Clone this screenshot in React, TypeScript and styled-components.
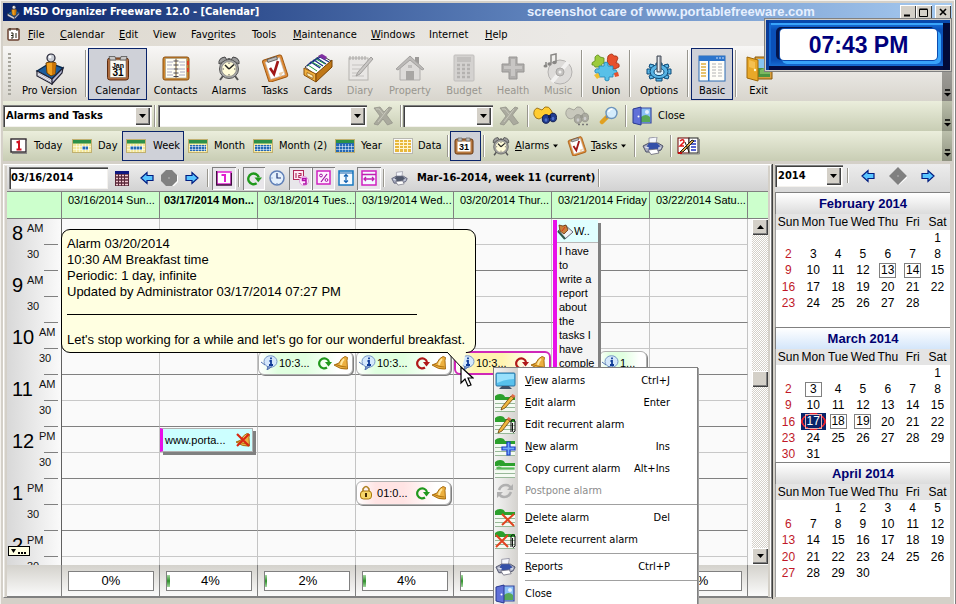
import React from "react";
import styled, { createGlobalStyle, css } from "styled-components";

const UI = `"DejaVu Sans Condensed", "DejaVu Sans", sans-serif`;
const ARIAL = `"Liberation Sans", Arial, sans-serif`;

const Global = createGlobalStyle`
  * { box-sizing: border-box; }
  html, body { margin: 0; height: 100%; overflow: hidden; }
  body { font: 11px/14px ${UI}; color: #000; background: #d4d0c8; }
  button, input, select { font: inherit; color: inherit; margin: 0; }
  button { background: none; border: 0; padding: 0; white-space: nowrap; }
  svg { display: block; flex: none; }
  u { text-underline-offset: 1px; }
`;

/* ---------- icons ---------- */

type IconProps = { w?: number; h?: number; vb?: string; children?: React.ReactNode };
const Icon = ({ w = 16, h = w, vb, children }: IconProps) => (
  <svg width={w} height={h} viewBox={vb ?? `0 0 ${w} ${h}`} aria-hidden="true">
    {children}
  </svg>
);

const ProIcon = ({ size = 32 }: { size?: number }) => (
  <Icon w={size} vb="0 0 32 32">
    <path d="M3 18L16 10L29 15L18 26Z" fill="#1c5c9c" stroke="#062a50" strokeWidth="1.4" />
    <path d="M3 18L18 26L18 31L3 23Z" fill="#f4f4fa" stroke="#223" strokeWidth="1.2" />
    <path d="M18 26L29 15L28 20L18 31Z" fill="#b8bcd8" stroke="#223" strokeWidth="1.2" />
    <path d="M4 20L18 28M4 22L18 30" stroke="#99a" strokeWidth=".7" />
    <path d="M12 10Q17 7 22 10L21 21L17 23L13 20Z" fill="#f0a020" stroke="#6a3c00" strokeWidth="1" />
    <path d="M18 10L22 10L21 21L18 22Z" fill="#c87408" />
    <circle cx="17" cy="5" r="4" fill="#c8ccd4" stroke="#223" strokeWidth="1.2" />
    <circle cx="16" cy="4" r="1.4" fill="#fff" />
  </Icon>
);

const JanIcon = () => (
  <Icon w={24} h={26}>
    <rect x="1.5" y="3" width="21" height="22" rx="2.5" fill="#b06a3c" stroke="#5c2c10" />
    <rect x="4" y="5" width="16" height="17.5" fill="#fbfbf4" stroke="#7a6a5a" strokeWidth=".6" />
    <path d="M3 1.5H9L10 5H4ZM15 1.5H21L20 5H14Z" fill="#c8c8c8" stroke="#555" strokeWidth=".8" />
    <text x="12" y="12.5" fontSize="7" fontWeight="bold" textAnchor="middle" fontFamily="Liberation Sans">Jan</text>
    <text x="12" y="21" fontSize="10" fontWeight="bold" textAnchor="middle" fontFamily="Liberation Sans">31</text>
  </Icon>
);

const ContactsIcon = () => (
  <Icon w={28} h={26}>
    <rect x="1" y="2" width="26" height="23" rx="2" fill="#d08830" stroke="#8a5010" />
    <rect x="3.500" y="3.500" width="10" height="19.500" fill="#fffef4" stroke="#998" strokeWidth=".6" />
    <rect x="14.500" y="3.500" width="10" height="19.500" fill="#fffef4" stroke="#998" strokeWidth=".6" />
    <path d="M5 7h6M5 10h5M5 14h6M5 17h5M5 20h6M17 7h6M18 10h5M17 14h6M18 17h5M17 20h6" stroke="#a8a8c0" strokeWidth="1" />
    <path d="M11.500 6h5M11.500 10h5M11.500 14h5M11.500 18h5M11.500 21.500h5" stroke="#445" strokeWidth="1" />
    <path d="M25 6h2v4h-2zM25 13h2v4h-2z" fill="#e04020" />
  </Icon>
);

const ClockIcon = ({ size = 26 }: { size?: number }) => (
  <Icon w={size} vb="0 0 26 26">
    <path d="M7 21L4 25M19 21L22 25" stroke="#555" strokeWidth="2" />
    <path d="M3 9Q2 3 9 2L11 5Z" fill="#9a9a9a" stroke="#444" />
    <path d="M23 9Q24 3 17 2L15 5Z" fill="#9a9a9a" stroke="#444" />
    <path d="M11.500 3h3v2h-3z" fill="#666" />
    <circle cx="13" cy="14" r="9.500" fill="#a8a8a8" stroke="#555" />
    <circle cx="13" cy="14" r="7.400" fill="#fffbd8" stroke="#777" strokeWidth=".7" />
    <path d="M13 14L9 10M13 14L18 9.500" stroke="#222" strokeWidth="1.500" />
    <path d="M13 7.500v1.500M13 19v1.500M6.500 14H8M18 14h1.500" stroke="#555" />
  </Icon>
);

const TaskIcon = ({ size = 28 }: { size?: number }) => (
  <Icon w={size} vb="0 0 28 28">
    <g transform="rotate(-18 14 14)">
      <rect x="4" y="3" width="20" height="23" rx="2" fill="#e08c38" stroke="#a05810" />
      <rect x="6.500" y="5.500" width="15" height="18" fill="#fff" stroke="#bbb" strokeWidth=".6" />
      <path d="M9 3.500h10v3H9z" fill="#b8b8b8" stroke="#555" strokeWidth=".8" />
      <path d="M16 20h6l-6 4z" fill="#f0d0a8" />
    </g>
    <path d="M9 14L13 20L17 7" fill="none" stroke="#a01818" strokeWidth="2.600" />
  </Icon>
);

const CardsIcon = () => (
  <Icon w={30} h={30}>
    <path d="M2 14L18 2L28 8L14 23Z" fill="#fff" stroke="#444" />
    <path d="M4 13L8 9l9 6M7 11l4-4 9 6M10 9l4-4 9 6M13 7l4-3 9 5" fill="none" stroke="#1b2f86" strokeWidth="1.300" />
    <path d="M5 12l9 6M9 9l9 5M13 6l9 5" stroke="#20a040" />
    <path d="M15 3l4-2 5 3-2 3z" fill="#8030a0" />
    <path d="M1 15L13 21V29L1 22Z" fill="#f0b040" stroke="#8a5008" />
    <path d="M13 21L29 7V14L13 29Z" fill="#c07818" stroke="#7a4404" />
    <path d="M4 19.500l6 3v3l-6-3z" fill="#fff3c0" stroke="#8a5008" strokeWidth=".7" />
  </Icon>
);

const DiaryIcon = () => (
  <Icon w={28}>
    <rect x="3" y="4" width="19" height="22" fill="#e8e6e4" stroke="#b4b2ae" />
    <path d="M4 2v4M7 2v4M10 2v4M13 2v4M16 2v4M19 2v4" stroke="#a8a6a4" />
    <path d="M6 11h12M6 15h8M6 19h5M6 22h12" stroke="#c4c2c0" />
    <path d="M25 3l2 2L14 20l-4 2 2-4z" fill="#c8c6c4" stroke="#a09e9c" />
  </Icon>
);

const HouseIcon = () => (
  <Icon w={30} h={28}>
    <path d="M20 3h4v7h-4z" fill="#9c9a98" />
    <path d="M5 14L15 5L25 14V26H5Z" fill="#dddbd9" stroke="#b0aeac" />
    <path d="M1 15L15 2L29 15L27 16L15 6L3 16Z" fill="#bcbab8" stroke="#a4a2a0" />
    <path d="M11 17h8v9h-8z" fill="#a8a6a4" /><path d="M13 11h4v3h-4z" fill="#c0bebc" />
  </Icon>
);

const BudgetIcon = () => (
  <Icon w={22} h={28}>
    <rect x="1" y="1" width="20" height="26" rx="1" fill="#d4d2d0" stroke="#c0bebc" />
    <rect x="4" y="3" width="14" height="5" fill="#c2c0be" />
    {[11, 15, 19, 23].map((y) => (
      <path key={y} d={`M4 ${y}h3M9 ${y}h3M14 ${y}h3`} stroke="#b4b2b0" strokeWidth="2.500" />
    ))}
  </Icon>
);

const HealthIcon = () => (
  <Icon w={26}>
    <path d="M9 2h8v7h7v8h-7v7H9v-7H2V9h7z" fill="#b0aeac" stroke="#989694" />
    <path d="M11 4h4v7h7v3h-7v7h-4v-7H4v-3h7z" fill="#c8c6c4" />
  </Icon>
);

const MusicIcon = () => (
  <Icon w={30} h={32}>
    <circle cx="17" cy="19" r="12" fill="#dddbd9" stroke="#b4b2b0" />
    <path d="M17 19L25 9M17 19L9 29" stroke="#f2f1f0" strokeWidth="4" />
    <circle cx="17" cy="19" r="4" fill="#c4c2c0" stroke="#aaa8a6" /><circle cx="17" cy="19" r="1.500" fill="#f2f1f0" />
    <path d="M8 10V2l5-1v8M3 13V9" stroke="#888684" fill="none" strokeWidth="1.500" />
    <ellipse cx="6.500" cy="11" rx="2.200" ry="1.700" fill="#888684" /><ellipse cx="11.500" cy="9.500" rx="2.200" ry="1.700" fill="#888684" />
    <ellipse cx="2.500" cy="13" rx="2" ry="1.500" fill="#888684" />
  </Icon>
);

const UnionIcon = () => (
  <Icon w={30} h={30}>
    <path d="M4 4q3-4 5 0l4 1v5q-4 1-2 4H4q-1-3-3-2-1-3 3-4z" fill="#9ccb3c" stroke="#5c8a18" strokeWidth=".8" />
    <path d="M17 3q4-4 6 0 3-1 4 2l-2 5q4 0 3 4l-4 2q-5 0-5-4-4-1-2-9z" fill="#e8502c" stroke="#a02c10" strokeWidth=".8" />
    <path d="M8 13h5q-1-4 2-4t2 4h5v4q4-1 4 2t-4 2v3h-4q1 4-2 4t-2-4H8v-4q-5 1-4-3 1-2 4-1z" fill="#58c0e8" stroke="#1c80b0" strokeWidth=".8" />
    <path d="M23 20l4-1 1 4-4 1z" fill="#e8502c" /><path d="M3 22l4-2 2 4-3 2z" fill="#f0c030" />
  </Icon>
);

const OptionsIcon = () => (
  <Icon w={28} h={28}>
    <g stroke="#0c4a78" strokeWidth="1" fill="#58b4e4">
      <path d="M11 9h6v4h-6zM11 23h6v4h-6zM2 15h5v5H2zM21 15h5v5h-5z" />
      <path d="M5 10l4 1-1 4-4-2zM23 10l-4 1 1 4 4-2zM5 25l4-1-1-4-4 2zM23 25l-4-1 1-4 4 2z" />
      <ellipse cx="14" cy="17.500" rx="9" ry="7" />
    </g>
    <ellipse cx="14" cy="18" rx="5" ry="3.600" fill="#d8f0fc" stroke="#0c4a78" />
    <path d="M12 2h4v16h-4z" fill="#a8acb4" stroke="#444c58" /><path d="M13 3h1v14h-1z" fill="#e8ecf0" />
  </Icon>
);

const BasicIcon = () => (
  <Icon w={28} h={27}>
    <rect x="1" y="1" width="26" height="25" fill="#fffef8" stroke="#2c6cb4" />
    <path d="M1 1h26v5H1z" fill="#2c74cc" /><path d="M18 3h2M21 3h2M24 3h2" stroke="#cfe4ff" />
    <path d="M10 6h1.500v20H10z" fill="#2c74cc" />
    <path d="M3 9h5M3 12h5M3 15h5M3 18h5M3 21h5" stroke="#e0b040" strokeWidth="1.500" />
    <path d="M14 9h4M20 9h4M14 12h4M20 12h4M14 15h4M20 15h4M14 18h4M20 18h4M14 21h4M20 21h4" stroke="#b4b4b4" />
  </Icon>
);

const ExitIcon = () => (
  <Icon w={28}>
    <path d="M10 3h17v22H10z" fill="#d8a040" stroke="#8a5808" />
    <path d="M12 5h13v9H12z" fill="#88c4f0" /><path d="M12 14h13v9H12z" fill="#4c9440" /><path d="M15 16l6-3 4 3v4H15z" fill="#7cb860" />
    <path d="M2 3l11 3v21L2 24z" fill="#e8a828" stroke="#a06808" /><path d="M4 6l6 2v7L4 13z" fill="#f4c050" />
    <circle cx="10" cy="16" r="1.200" fill="#fff8d0" />
  </Icon>
);

const CrossIcon = () => (
  <Icon w={22} h={20}>
    <path d="M2 2l6-1 4 5 5-5 3 1-5.500 7 6 8-5 2-4.500-6-5 6-4-1L8 10z" fill="#aaaa9e" stroke="#94948a" strokeWidth=".8" />
    <path d="M4 3l3 0 4 5M16 3L6 16" stroke="#c8c8bc" fill="none" />
  </Icon>
);

const BinocularsIcon = ({ muted }: { muted?: boolean }) => {
  const [a, b, c] = muted ? ["#c8c8bc", "#aaaaa0", "#999990"] : ["#ffcc30", "#203c90", "#101c50"];
  return (
    <Icon w={26} h={20}>
      <path d="M2 9q-1-5 3-7l5 2 3-3q4-1 6 3l3 6-4 4-7-3-4 2-3-1z" fill={a} stroke={muted ? c : "#8a6008"} strokeWidth=".8" />
      <ellipse cx="14" cy="13" rx="3.700" ry="4.300" fill={b} stroke={c} /><ellipse cx="21" cy="11.500" rx="3.500" ry="4.300" fill={b} stroke={c} />
      <path d="M16 9h3v3h-3z" fill={c} />
      <ellipse cx="14" cy="14" rx="1.400" ry="1.800" fill={muted ? "#ccc" : "#5070c8"} /><ellipse cx="21" cy="12.500" rx="1.300" ry="1.800" fill={muted ? "#ccc" : "#5070c8"} />
      {muted && <path d="M14 18.500h2M18 18.500h2M22 18.500h2" stroke="#777" strokeWidth="1.500" />}
    </Icon>
  );
};

const LensIcon = () => (
  <Icon w={20} h={20}>
    <path d="M8 11L3 16" stroke="#e0a020" strokeWidth="4.500" strokeLinecap="round" />
    <path d="M9 10l-2 2" stroke="#888" strokeWidth="2" />
    <circle cx="12.500" cy="7" r="5.500" fill="#d4ecfc" stroke="#6c94bc" strokeWidth="1.400" />
    <path d="M9.500 6q1-3 4-3" stroke="#fff" fill="none" strokeWidth="1.500" />
  </Icon>
);

const DoorIcon = ({ size = 20 }: { size?: number }) => (
  <Icon w={size} vb="0 0 20 20">
    <path d="M8 2h11v15H8z" fill="#8cc0f8" stroke="#3848a0" strokeWidth="1.200" />
    <path d="M9 11q5-4 9 0v5H9z" fill="#58a858" /><circle cx="15" cy="6" r="2" fill="#e4f0ff" />
    <path d="M1 3l8-2v18l-8-2z" fill="#6070d8" stroke="#283890" /><circle cx="6.500" cy="10.500" r="1" fill="#fff" />
  </Icon>
);

const TodayIcon = () => (
  <Icon w={17} h={16}>
    <rect x="1" y="1" width="15" height="13" fill="#fff" stroke="#302830" strokeWidth="1.400" />
    <path d="M2 15.500h15V3" stroke="#888" fill="none" />
    <path d="M6.500 4.500L9 3.500V11M6.500 11.500H11.500" stroke="#d01020" strokeWidth="2" fill="none" />
  </Icon>
);

type GridIconProps = { body: string; cells?: string; top?: string };
const GridIcon = ({ body, cells = "#f4e89c", top = "#2c9048" }: GridIconProps) => (
  <Icon w={20} h={14}>
    <rect x=".5" y=".5" width="19" height="13" fill={cells} stroke="#c0b070" />
    <path d="M1 1h18v3.500H1z" fill={top} />
    <path d={body} fill="#2468b4" />
    <path d="M1 7.500h18M1 10.500h18M4.500 5v8M7.500 5v8M10.500 5v8M13.500 5v8M16.500 5v8" stroke="#fff" strokeOpacity=".5" />
  </Icon>
);

const DataIcon = () => (
  <Icon w={20} h={16}>
    <rect x=".5" y=".5" width="19" height="15" fill="#f8f8f8" stroke="#b8b8b0" />
    <path d="M2 2h16v12H2z" fill="#e8b83c" />
    <path d="M2 4.500h16M2 7.500h16M2 10.500h16M6.500 2v12M10.500 2v12M14.500 2v12" stroke="#fff4d0" />
  </Icon>
);

const Board31Icon = () => (
  <Icon w={20} h={18}>
    <rect x="1" y="2" width="18" height="15" rx="2" fill="#b87840" stroke="#6a3810" />
    <rect x="3.500" y="4.500" width="13" height="10" fill="#fff" />
    <path d="M4 1h4v3H4zM12 1h4v3h-4z" fill="#bbb" stroke="#666" strokeWidth=".7" />
    <text x="10" y="13.300" fontSize="9" fontWeight="bold" textAnchor="middle" fontFamily="Liberation Sans">31</text>
  </Icon>
);

const PrinterIcon = ({ w = 22, h = 18, grey }: { w?: number; h?: number; grey?: boolean }) => (
  <Icon w={w} h={h} vb="0 0 22 18">
    <path d="M7 1l8-1-1 7H7z" fill="#f4f6fc" stroke="#889" strokeWidth=".8" />
    <path d="M1 9l6-3h9l5 3-2 4-5 2H4z" fill="#a8acc0" stroke="#4c5068" />
    <path d="M7 6h8l3 3-2 3-9 1-2-4z" fill={grey ? "#50586c" : "#3450a8"} />
    <path d="M3 10l4 1M16 11h3" stroke="#e4e8f4" strokeWidth="1.200" />
    <path d="M6 13l9-1 2 4-8 1.500z" fill="#fff" stroke="#667" strokeWidth=".8" />
  </Icon>
);

const NotebookIcon = () => (
  <Icon w={24} h={18}>
    <rect x="1" y="1" width="11" height="15" fill="#fff" stroke="#600" />
    <rect x="12" y="1" width="9" height="15" fill="#fff" stroke="#222" /><path d="M22.500 2v15H3" fill="none" stroke="#888" />
    <path d="M3 4q4-3 4 1l-4 4h4" stroke="#e01818" strokeWidth="1.500" fill="none" />
    <path d="M14 4h5M14 7h5M14 10h5M14 13h5" stroke="#2030c0" strokeWidth="1.400" />
    <path d="M3 15L15 3l2 1L6 15z" fill="#d8a050" stroke="#221" /><path d="M8 5l4 10" stroke="#221" />
    <path d="M1 15h4v2H1z" fill="#c01010" />
  </Icon>
);

const CalGridIcon = () => (
  <Icon w={14} h={15}>
    <path d="M0 0h14v15H0z" fill="#582838" /><path d="M0 0h14v3H0z" fill="#101880" />
    {[4, 7, 10, 13].map((y) => (
      <path key={y} d={`M1 ${y + 0.500}h2M4 ${y + 0.500}h2M7 ${y + 0.500}h2M10 ${y + 0.500}h3`} stroke="#f0c8d0" strokeWidth="1.500" />
    ))}
  </Icon>
);

const ArrowIcon = ({ right }: { right?: boolean }) => (
  <Icon w={14} h={14}>
    <path
      d={right ? "M13 7L7 1.500V4.500H1V9.500H7V12.500Z" : "M1 7L7 1.500V4.500H13V9.500H7V12.500Z"}
      fill="#58c4ff" stroke="#001c80" strokeWidth="1.200"
    />
  </Icon>
);

const DiamondIcon = ({ round }: { round?: boolean }) => (
  <Icon w={18} h={18}>
    <path d={round ? "M7 2h6l5 5v6l-4 4H7L2 13V7z" : "M10 1l9 9-9 8-8-8z"} fill="#fff" />
    <path d={round ? "M6 1h6l5 5v6l-5 5H6L1 12V6z" : "M9 0l9 9-9 9-9-9z"} fill="#808080" />
    <path d="M9 8v2M8 9h2" stroke="#a4a4a4" />
  </Icon>
);

const OneIcon = () => (
  <Icon w={16} h={15}>
    <rect x="1" y="1" width="14" height="12" fill="#fff" stroke="#e020d0" strokeWidth="1.500" />
    <path d="M.5 0v14M0 14h16M15.500 14V2" fill="none" stroke="#401040" strokeWidth="1.500" />
    <path d="M5.500 4H9v7" stroke="#e020d0" strokeWidth="2" fill="none" />
  </Icon>
);

const RefreshIcon = ({ color = "#20981c", size = 14 }: { color?: string; size?: number }) => (
  <Icon w={size} vb="0 0 14 14">
    <path d="M9 11.500A5 5 0 1 1 11 6" fill="none" stroke={color} strokeWidth="2.200" />
    <path d="M7 6h7l-3.500 4.500z" fill={color} />
  </Icon>
);

const FaceIcon = () => (
  <Icon w={16}>
    <circle cx="8" cy="8" r="7" fill="#e4f0fc" stroke="#6080b8" strokeWidth="1.500" />
    <path d="M8 3v5h4" stroke="#203878" fill="none" strokeWidth="1.200" />
    <path d="M8 13v1M2.500 8h1" stroke="#6080b8" />
  </Icon>
);

const TwelveIcon = () => (
  <Icon w={16}>
    <rect x=".5" y=".5" width="10" height="9" fill="#ffe8f4" stroke="#b02858" />
    <path d="M3 3v5M5.500 3.500h2.500v2H5.800v2H8.500" stroke="#b02858" fill="none" strokeWidth="1.100" />
    <circle cx="11" cy="11" r="4.500" fill="#ffe8ff" stroke="#e0a0dc" />
    <path d="M13 10.500H9.500v-2H13v5.500H10" stroke="#b010a8" strokeWidth="1.500" fill="none" />
  </Icon>
);

const PercentIcon = () => (
  <Icon w={16}>
    <rect x="1" y="1" width="13" height="13" fill="#fff0ff" stroke="#d020c0" strokeWidth="1.500" />
    <path d="M11 4L5 12" stroke="#a010a0" strokeWidth="1.200" />
    <circle cx="5" cy="5.500" r="1.400" fill="none" stroke="#a010a0" /><circle cx="10.500" cy="10" r="1.400" fill="none" stroke="#a010a0" />
  </Icon>
);

const StretchIcon = ({ across }: { across?: boolean }) => (
  <Icon w={16}>
    <rect x="1" y="1" width="14" height="14" fill="#f4faff" stroke={across ? "#d020c0" : "#1878c0"} strokeWidth="1.500" />
    {across ? (
      <path d="M1 4.500h14M3 9h10M5 7L3 9l2 2M11 7l2 2-2 2" stroke="#c020b0" fill="none" strokeWidth="1.300" />
    ) : (
      <path d="M1 3h14M8 4.500v8M6 6.500l2-2 2 2M6 10.500l2 2 2-2" stroke="#1060b0" fill="none" strokeWidth="1.200" />
    )}
  </Icon>
);

const InfoIcon = () => (
  <Icon w={17} h={15}>
    <ellipse cx="9.500" cy="6.500" rx="6.500" ry="5.800" fill="#d4e8fc" stroke="#7898c8" />
    <path d="M0 7l4 3M7 11l-1 4 5-3.500" fill="#7898c8" stroke="#5070b0" />
    <path d="M10 2.500v1.800M8.500 6h1.500v4M8 10h4" stroke="#103c98" strokeWidth="1.800" fill="none" />
  </Icon>
);

const BellIcon = ({ off }: { off?: boolean }) => (
  <Icon w={16} h={16}>
    <path d="M12 1.500l2.500 1-.5 3 .5 8.500q-7 1-13.500-4l5-2q2-5 6-6.500z" fill="#ecb040" stroke="#a06408" strokeWidth=".9" />
    <path d="M11 4q-3 3-3 6" stroke="#ffe8a0" strokeWidth="1.800" fill="none" />
    <path d="M3 9.500q5 2.500 10.500 2.500" stroke="#a06408" strokeWidth=".8" fill="none" />
    {off && <path d="M2 2l12 12M14 2L2 14" stroke="#d82810" strokeWidth="2.200" />}
  </Icon>
);

const LockIcon = () => (
  <Icon w={14} h={15}>
    <path d="M4 7V4q3-5 6 0v3" fill="none" stroke="#b08020" strokeWidth="1.600" />
    <rect x="1.500" y="6" width="11" height="8" rx="3" fill="#f8d868" stroke="#a87810" />
    <path d="M7 8v4" stroke="#402800" strokeWidth="2" />
  </Icon>
);

const NoteIcon = () => (
  <Icon w={17} h={17}>
    <path d="M1 8l7-6 8 7-8 7z" fill="#eef2f4" stroke="#667" /><path d="M1 8l7 8" stroke="#30584c" strokeWidth="2" />
    <path d="M2 2l4 1 3-1 2 5-4 4-4-3z" fill="#c8803c" stroke="#6a3410" strokeWidth=".8" /><path d="M5 8l3-4" stroke="#e03018" />
  </Icon>
);

const MonitorIcon = () => (
  <Icon w={21} h={18}>
    <rect x="1" y="1" width="19" height="13" rx="1" fill="#58c0ec" stroke="#2870a0" />
    <path d="M2 2h17v5q-8 0-17 4z" fill="#98e0fc" /><path d="M7 14h7l3 3H4z" fill="#405068" />
  </Icon>
);

type SheetIconProps = { mark?: "pencil" | "plus" | "cross" | "copy"; clip?: boolean };
const SheetIcon = ({ mark, clip }: SheetIconProps) => (
  <Icon w={21} h={18}>
    <path d="M0 4h20v14H0z" fill="#f4faf2" />
    <path d="M0 17.500h20M0 9.500h20M0 13.500h20" stroke="#98b898" />
    <path d="M0 6V2q2-2 5-2 4 0 5 3h10v3z" fill="#2ca02c" />
    {mark === "pencil" && (
      <>
        <path d={clip ? "M4 14L12 3l3 2L7 15l-4 2z" : "M7 13L16 2l3 2L10 14l-4 2z"} fill="#f0b840" stroke="#6a4008" strokeWidth=".8" />
        <path d={clip ? "M12 3l1.500-2 3 2-1.500 2z" : "M16 2l1.500-2 3 2-1.500 2z"} fill="#e06848" />
      </>
    )}
    {mark === "plus" && <path d="M12 4h3v5h5v3h-5v5h-3v-5H7V9h5z" fill="#70a8f8" stroke="#1838c8" strokeWidth="1.200" />}
    {mark === "cross" && <path d={clip ? "M1 4l12 12M13 4L1 16" : "M7 5l12 12M19 5L7 16"} stroke="#e04420" strokeWidth="2" />}
    {mark === "copy" && <path d="M1 7q3-2 6 0h13v3H1z" fill="#58b858" stroke="#e4f4e0" strokeWidth=".8" />}
    {clip && <path d="M16 16V5q2-3 4 0v10q-2 3-2.500 0V7" fill="none" stroke="#111" strokeWidth="1" />}
  </Icon>
);

const CycleIcon = () => (
  <Icon w={20} h={18}>
    <path d="M4 8q2-5 7-5 3 0 5 3M16 10q-2 5-7 5-3 0-5-3" fill="none" stroke="#b0b0b0" strokeWidth="2.600" />
    <path d="M18 2v6h-6zM2 16v-6h6z" fill="#b0b0b0" />
  </Icon>
);

const CursorIcon = () => (
  <Icon w={14} h={22}>
    <path d="M1 1v16l4-4 3 7 3-1-3-7h5z" fill="#fff" stroke="#000" strokeWidth="1.200" />
  </Icon>
);

const DownIcon = ({ w = 7 }: { w?: number }) => (
  <Icon w={w} h={4} vb="0 0 7 4"><path d="M0 0h7L3.500 4z" fill="#000" /></Icon>
);

/* ---------- frame ---------- */

const Page = styled.div`
  position: relative; height: 100vh; display: flex; flex-direction: column;
  padding: 3px 4px 6px 3px; overflow: hidden; background: #d4d0c8;
  box-shadow: inset -1px 0 #808080, inset -2px 0 #fff, inset 1px 1px #f4f2ee;
`;
const TitleBar = styled.header`
  display: flex; align-items: center; height: 18px; flex: none; padding: 0 1px 0 3px; gap: 2px;
  color: #fff; background: linear-gradient(90deg, #0a246a, #5c80ba 55%, #a6caf0);
`;
const Title = styled.h1`
  margin: 0; flex: 1 1 0; font: bold 11px/14px ${UI}; white-space: nowrap;
`;
const Credit = styled.span`
  flex: 0 0 373px; font: bold 13px/14px ${ARIAL}; color: #e6f0ff; white-space: nowrap;
`;
const WinButton = styled.button<{ $gap?: boolean }>`
  width: 16px; height: 14px; margin-left: ${(p) => (p.$gap ? 1 : -2)}px; display: grid; place-items: center;
  background: #d4d0c8; box-shadow: inset 1px 1px #fff, inset -1px -1px #404040;
`;
const MenuBar = styled.nav`
  display: flex; align-items: center; height: 25px; flex: none; padding: 2px 0 0 4px; background: linear-gradient(90deg, #ddd8ce, #ebe9e6 60%);
`;
const MenuLink = styled.button<{ $w: number }>`
  width: ${(p) => p.$w}px; text-align: left; font-size: 11px;
`;
const MenuIcon = styled.span`width: 21px;`;

/* ---------- toolbars ---------- */

const Bar = styled.div<{ $tone?: "green" }>`
  position: relative; display: flex; align-items: center; flex: none; padding-right: 12px; overflow: hidden;
  background: ${(p) =>
    p.$tone ? "linear-gradient(#ebeedc, #c8cdb4)" : "linear-gradient(#f8f7f6, #d8d5cd)"};
`;
const BigBar = styled(Bar)`height: 55px; padding-left: 4px;`;
const SmallBar = styled(Bar)`height: 30px;`;
const ViewBar = styled(SmallBar)`padding-left: 3px;`;
const Overflow = styled.button<{ $dark?: boolean }>`
  position: absolute; right: 0; top: 0; bottom: 0; width: 10px; display: flex; align-items: flex-end; justify-content: center;
  padding-bottom: 4px; background: ${(p) => (p.$dark ? "linear-gradient(#b0aeaa, #888680)" : "linear-gradient(#bcc0ac, #8e9280)")};
`;
const Grip = styled.span`
  width: 3px; height: 42px; margin: 0 5px 0 1px;
  background: repeating-linear-gradient(#a8a69e 0 2px, transparent 2px 4px);
`;
const Sep = styled.span<{ $l?: number; $r?: number }>`
  flex: none; align-self: stretch; width: 2px; margin: 4px ${(p) => p.$r ?? 1}px 4px ${(p) => p.$l ?? 1}px;
  background: linear-gradient(90deg, #98968e 50%, #fff 50%);
`;
const BigButton = styled.button<{ $w: number; $on?: boolean }>`
  width: ${(p) => p.$w}px; height: 52px; flex: none; display: flex; flex-direction: column; align-items: center;
  border: 1px solid ${(p) => (p.$on ? "#0a246a" : "transparent")};
  background: ${(p) => (p.$on ? "#cfd1d8" : "transparent")};
  &:disabled { color: #98968f; }
`;
const BigGlyph = styled.span`height: 35px; display: grid; place-items: center; padding-top: 4px;`;
const TextButton = styled.button<{ $w: number; $on?: boolean; $gap?: number }>`
  width: ${(p) => p.$w}px; height: 30px; flex: none; display: flex; align-items: center; gap: ${(p) => p.$gap ?? 6}px; padding: 0 3px;
  border: 1px solid ${(p) => (p.$on ? "#0a246a" : "transparent")};
  background: ${(p) => (p.$on ? "#cfd1d8" : "transparent")};
`;
const IconButton = styled.button<{ $w: number }>`
  width: ${(p) => p.$w}px; height: 26px; flex: none; display: grid; place-items: center;
`;

const sunken = css`
  background: #fff; border: 0;
  box-shadow: inset 1px 1px #808080, inset 2px 2px #404040, inset -1px -1px #f4f2ee;
`;
const Field = styled.input`
  ${sunken} width: 99px; height: 22px; padding: 2px 2px 4px; font-weight: bold; outline: 0;
`;
const SelectBox = styled.span<{ $w: number }>`
  ${sunken} display: flex; flex: none; width: ${(p) => p.$w}px; height: 22px; padding: 2px; align-items: stretch;
`;
const BareSelect = styled.select`
  flex: 1; min-width: 0; appearance: none; border: 0; background: none; padding: 0 0 0 1px; outline: 0;
  font: bold 11px/16px ${UI};
`;
const raised = css`
  background: #d4d0c8; box-shadow: inset 1px 1px #fff, inset -1px -1px #404040, inset -2px -2px #808080;
`;
const DropMark = styled.span`${raised} width: 15px; display: grid; place-items: center; pointer-events: none;`;

const Select = ({ label, value, w }: { label: string; value: string; w: number }) => (
  <SelectBox $w={w}>
    <BareSelect aria-label={label} defaultValue={value}><option value={value}>{value}</option></BareSelect>
    <DropMark><DownIcon /></DropMark>
  </SelectBox>
);

const More = ({ dark }: { dark?: boolean }) => (
  <Overflow $dark={dark} aria-label="More buttons">
    <Icon w={7} h={8}><path d="M1 1h5" stroke="#000" strokeWidth="1.500" /><path d="M0 4h7L3.500 7.500z" fill="#000" /></Icon>
  </Overflow>
);

/* ---------- main panels ---------- */

const Main = styled.main`flex: 1; min-height: 0; display: flex; background: #d4d0c8; padding-top: 3px;`;
const Planner = styled.section`
  position: relative; flex: 1; min-width: 0; display: flex; flex-direction: column;
  border: 1px solid #808080; border-top-color: #fff; border-left-color: #fff; padding: 0 3px; background: #d4d0c8;
  box-shadow: inset -1px 0 #fff, inset 1px 1px #e8e6e0;
`;
const PlanBar = styled.div`
  display: flex; align-items: center; height: 27px; flex: none; background: linear-gradient(#ececec, #d2d2d2); padding-left: 2px;
  border-bottom: 1px solid #808080;
`;
const Toggle = styled.button<{ $on?: boolean; $w?: number }>`
  width: ${(p) => p.$w ?? 24}px; height: 23px; flex: none; display: grid; place-items: center;
  ${(p) => p.$on && css`background: #e8e6ea; box-shadow: inset 1px 1px #808080, inset -1px -1px #fff;`}
`;
const WeekLabel = styled.h2`margin: 0 2px 0 6px; font: bold 11px/14px ${UI}; white-space: nowrap;`;

const COLS = "55px repeat(7, minmax(0, 1fr)) 20px";
const DayHeads = styled.div`
  display: grid; grid-template-columns: ${COLS}; height: 27px; flex: none; background: #ccffcc; border-bottom: 1px solid #808080;
  font: 11px/14px ${ARIAL};
`;
const DayHead = styled.div<{ $now?: boolean }>`
  border-right: 1px solid #808080; padding: 1px 0 0 ${(p) => (p.$now ? 4 : 6)}px; overflow: hidden; white-space: nowrap;
  font-weight: ${(p) => (p.$now ? "bold" : "normal")};
`;
const Body = styled.div`
  flex: 1; min-height: 0; overflow: hidden; display: grid; grid-template-columns: ${COLS};
  grid-template-rows: repeat(14, 26px); background: #fafafa;
`;
const TimeCell = styled.div<{ $row: number; $two: boolean }>`
  grid-column: 1; grid-row: ${(p) => p.$row} / span 2; display: grid; grid-template-rows: 26px 26px;
  grid-template-columns: ${(p) => (p.$two ? 26 : 14)}px 1fr; column-gap: 2px; padding-left: 4px;
  border-right: 1px solid #606060; background: linear-gradient(90deg, #d8d8d8, #fafafa);
`;
const Hour = styled.b`font: 20px/28px ${ARIAL}; padding-left: 1px;`;
const Small = styled.span`font: 11px/18px ${ARIAL}; color: #111;`;
const Half = styled(Small)`grid-column: 2;`;
const Tick = styled.i<{ $row: number }>`
  grid-column: 1; grid-row: ${(p) => p.$row}; align-self: end; justify-self: end; width: 14px; height: 1px;
  margin-right: 4px; background: #808080;
`;
const Slot = styled.div<{ $col: number; $row: number }>`
  grid-column: ${(p) => p.$col}; grid-row: ${(p) => p.$row};
  border-right: 1px solid #c4c4c4; border-bottom: 1px solid ${(p) => (p.$row % 2 ? "#c8c8c8" : "#808080")};
`;
const ScrollTrack = styled.div`
  grid-column: 9; grid-row: 1 / -1; margin-left: 4px; display: flex; flex-direction: column;
  height: 345px; background: repeating-conic-gradient(#fff 0 25%, #d4d0c8 0 50%) 0 0 / 2px 2px;
`;
const ScrollButton = styled.button`${raised} height: 16px; display: grid; place-items: center;`;
const ScrollSpace = styled.span<{ $grow: number }>`flex: ${(p) => p.$grow};`;

const Entry = styled.div<{ $col: number; $row: number; $bg: string; $on?: boolean; $end?: boolean }>`
  grid-column: ${(p) => p.$col}; grid-row: ${(p) => p.$row}; align-self: end; height: 24px;
  justify-self: ${(p) => (p.$end ? "end" : "stretch")}; width: ${(p) => (p.$end ? "48px" : "auto")};
  margin-right: ${(p) => (p.$on ? 1 : 3)}px; display: flex; align-items: center; gap: 1px; padding: 0 3px 1px 2px;
  border-radius: 6px; border: ${(p) => (p.$on ? "2px solid #d028b8" : "1px solid #b0b0b0")};
  background: linear-gradient(90deg, #ffffff00, ${(p) => p.$bg} 20%, ${(p) => p.$bg} 50%, #fff 85%), #fff;
  box-shadow: ${(p) => (p.$on ? "none" : "1px 1px #808080")};
  font: 11px/14px ${ARIAL}; white-space: nowrap;
`;
const EntryText = styled.span`flex: 1; min-width: 0;`;
const WebEntry = styled(Entry)`
  border-radius: 0; border: 1px solid #b0b0b0; border-left: 3px solid #e810e8; margin-right: 5px; padding-right: 1px;
  background: #ccffff; box-shadow: 3px 3px #808080; align-self: start; margin-top: 1px;
`;
const LongEntry = styled.article`
  grid-column: 7; grid-row: 1 / span 14; width: 45px; margin: 1px 0 0 1px; border-left: 4px solid #e810e8; background: #f4f4f4;
  box-shadow: 3px 3px #808080; font: 11px/14px ${ARIAL};
`;
const LongHead = styled.div`
  display: flex; align-items: center; height: 23px; background: #e0ffff; border-bottom: 1px solid #b8b8b8;
`;
const LongText = styled.p`margin: 1px 0 0; padding-left: 2px; width: 37px;`;

const Foot = styled.div`
  display: grid; grid-template-columns: ${COLS}; height: 32px; flex: none; background: linear-gradient(#d4d2cc, #fafafa);
  border-bottom: 1px solid #808080;
`;
const FootCell = styled.div`border-right: 1px solid #808080; padding: 6px 5px 6px 6px;`;
const Load = styled.div`
  display: flex; align-items: center; height: 20px; border: 1px solid #808080; background: #fff;
`;
const LoadBar = styled.i<{ $v: number }>`
  width: ${(p) => p.$v}px; height: 12px; background: linear-gradient(#a4d8a0, #30902c, #a4d8a0);
`;
const LoadText = styled.span`flex: 1; text-align: center; font: 13px/16px ${ARIAL};`;

const MoreBelow = styled.button`
  position: absolute; left: 4px; bottom: 41px; height: 10px; width: 22px; padding: 0 2px; display: flex; align-items: center;
  background: #ffffe1; border: 1px solid #000;
`;

const Tip = styled.div`
  position: absolute; z-index: 2; left: 57px; top: 64px; width: 415px; padding: 6px 0 4px 5px; white-space: nowrap;
  background: #ffffe1; border: 1px solid #000; border-radius: 9px; font: 13px/16px ${ARIAL};
`;
const TipLine = styled.p`margin: 0;`;
const TipRule = styled.hr`width: 350px; margin: 14px 0 17px; border: 0; border-top: 1px solid #000;`;
const TipTail = styled.span`position: absolute; left: 384px; top: 122px;`;
const Pointer = styled.span`position: absolute; left: 398px; top: 136px;`;

/* ---------- context menu ---------- */

const ContextMenu = styled.ul`
  position: absolute; z-index: 3; left: 489px; top: 202px; width: 205px; margin: 0; padding: 2px 0 2px; list-style: none;
  border: 1px solid #808080; background: linear-gradient(90deg, #f4f4f4, #d4d2ce 24px, #fff 24px);
  box-shadow: 1px 1px #a0a0a0;
`;
const MenuItem = styled.button`
  width: 100%; height: 22px; display: grid; grid-template-columns: 30px 1fr auto; align-items: center;
  padding: 0 27px 0 1px; text-align: left;
  &:disabled { color: #8c8c8c; }
`;
const MenuRule = styled.li`height: 5px; margin-left: 31px; padding-top: 2px; &::before { content: ""; display: block; height: 1px; background: #a0a0a0; }`;

/* ---------- right panel ---------- */

const Side = styled.aside`width: 180px; flex: none; display: flex; flex-direction: column; padding: 0 2px 0 2px; border-left: 1px solid #404040; margin-bottom: -1px;`;
const SideBar = styled.div`display: flex; align-items: center; height: 28px; flex: none; background: linear-gradient(#ececec, #d8d8d8); padding-bottom: 5px;`;
const Month = styled.table`
  width: 100%; height: 113px; flex: none; border-collapse: separate; border-spacing: 0; table-layout: fixed; background: #fff;
  border-left: 1px solid #a0a0a0; font: 12px/16px ${ARIAL}; text-align: center;
  td, th { padding: 0; font-weight: normal; height: 16px; }
`;
const MonthTitle = styled.caption<{ $now?: boolean }>`
  font: bold 13px/21px ${ARIAL}; color: #000070; border: solid #808080; border-width: 1px 0 0 1px;
  background: ${(p) => (p.$now ? "linear-gradient(#fff, #d4e6fa)" : "linear-gradient(#fff, #dcdcdc)")};
`;
const WeekRow = styled.tr`background: #e4e4e4; white-space: nowrap;`;
const Day = styled.td<{ $sun?: boolean; $today?: boolean }>`
  color: ${(p) => (p.$today ? "#fff" : p.$sun ? "#c01828" : "#000")};
  ${(p) => p.$today && css`background: radial-gradient(closest-side, #0a246a 82%, #e02030 84% 98%, #0a246a 100%);`}
`;
const Boxed = styled.span<{ $light?: boolean }>`
  display: block; width: 17px; height: 15px; margin: 0 auto; line-height: 15px;
  box-shadow: 0 0 0 1px ${(p) => (p.$light ? "#e8b0b0" : "#808080")} inset;
`;

const Clock = styled.div`
  position: absolute; z-index: 4; right: 4px; top: 18px; width: 188px; height: 54px; padding: 9px 13px 10px 14px;
  background: linear-gradient(#1c80ec, #0a50b8 20%, #0a50b8 80%, #2080e4);
  border: 2px solid #d4d0c8; outline: 1px solid #808080; outline-offset: -1px;
  box-shadow: inset 3px 0 #0a3c98, inset 0 3px #0848ac, inset -7px 0 #020a38, inset 0 -4px #020c44, inset 5px 0 #1468d0, inset 0 5px #38a4fa;
`;
const ClockFace = styled.time`
  display: grid; place-items: center; height: 31px; border-radius: 4px; background: #fff; color: #00007c;
  box-shadow: 0 0 0 1px #0c4cb0, -3px -1px 0 1px #04164c, 3px 3px 0 1px #38a4fa; font: bold 23px/28px ${ARIAL};
`;

/* ---------- data ---------- */

const menus: [React.ReactNode, number][] = [
  [<><u>F</u>ile</>, 32], [<><u>C</u>alendar</>, 59], [<><u>E</u>dit</>, 34], [<>View</>, 38], [<>Fav<u>o</u>rites</>, 61],
  [<>Tools</>, 41], [<><u>M</u>aintenance</>, 78], [<><u>W</u>indows</>, 58], [<>Internet</>, 56], [<><u>H</u>elp</>, 30],
];

const bigButtons: { name: string; w: number; icon: React.ReactNode; on?: boolean; off?: boolean; sep?: [number, number] }[] = [
  { name: "Pro Version", w: 67, icon: <ProIcon />, sep: [2, 1] },
  { name: "Calendar", w: 59, icon: <JanIcon />, on: true },
  { name: "Contacts", w: 57, icon: <ContactsIcon /> },
  { name: "Alarms", w: 50, icon: <ClockIcon /> },
  { name: "Tasks", w: 42, icon: <TaskIcon /> },
  { name: "Cards", w: 44, icon: <CardsIcon /> },
  { name: "Diary", w: 40, icon: <DiaryIcon />, off: true },
  { name: "Property", w: 60, icon: <HouseIcon />, off: true },
  { name: "Budget", w: 48, icon: <BudgetIcon />, off: true },
  { name: "Health", w: 50, icon: <HealthIcon />, off: true },
  { name: "Music", w: 40, icon: <MusicIcon />, off: true, sep: [3, 3] },
  { name: "Union", w: 40, icon: <UnionIcon />, sep: [3, 3] },
  { name: "Options", w: 50, icon: <OptionsIcon />, sep: [3, 2] },
  { name: "Basic", w: 42, icon: <BasicIcon />, on: true, sep: [2, 3] },
  { name: "Exit", w: 37, icon: <ExitIcon /> },
];

const heads = ["03/16/2014 Sun...", "03/17/2014 Mon...", "03/18/2014 Tues...", "03/19/2014 Wed...", "03/20/2014 Thur...", "03/21/2014 Friday", "03/22/2014 Satu..."];
const hours: [number, string][] = [[8, "AM"], [9, "AM"], [10, "AM"], [11, "AM"], [12, "PM"], [1, "PM"], [2, "PM"]];
const loads: [string, number][] = [["0%", 0], ["4%", 3], ["2%", 2], ["4%", 3], ["3%", 2], ["6%", 4], ["0%", 0]];

type Item = { text: React.ReactNode; keys?: string; icon: React.ReactNode; off?: boolean; rule?: boolean };
const items: Item[] = [
  { text: <><u>V</u>iew alarms</>, keys: "Ctrl+J", icon: <MonitorIcon /> },
  { text: <><u>E</u>dit alarm</>, keys: "Enter", icon: <SheetIcon mark="pencil" /> },
  { text: "Edit recurrent alarm", icon: <SheetIcon mark="pencil" clip /> },
  { text: <><u>N</u>ew alarm</>, keys: "Ins", icon: <SheetIcon mark="plus" /> },
  { text: "Copy current alarm", keys: "Alt+Ins", icon: <SheetIcon mark="copy" /> },
  { text: "Postpone alarm", icon: <CycleIcon />, off: true, rule: true },
  { text: <><u>D</u>elete alarm</>, keys: "Del", icon: <SheetIcon mark="cross" /> },
  { text: "Delete recurrent alarm", icon: <SheetIcon mark="cross" clip />, rule: true },
  { text: <><u>R</u>eports</>, keys: "Ctrl+P", icon: <PrinterIcon w={21} />, rule: true },
  { text: "Close", icon: <DoorIcon /> },
];

type MonthData = { name: string; first: number; days: number; boxed: number[]; today?: number };
const months: MonthData[] = [
  { name: "February 2014", first: 6, days: 28, boxed: [13, 14] },
  { name: "March 2014", first: 6, days: 31, boxed: [3, 17, 18, 19], today: 17 },
  { name: "April 2014", first: 2, days: 30, boxed: [] },
];

const MonthTable = ({ name, first, days, boxed, today }: MonthData) => (
  <Month>
    <MonthTitle $now={!!today}>{name}</MonthTitle>
    <thead>
      <WeekRow>{["Sun", "Mon", "Tue", "Wed", "Thu", "Fri", "Sat"].map((d) => <th key={d} scope="col">{d}</th>)}</WeekRow>
    </thead>
    <tbody>
      {[0, 1, 2, 3, 4, 5].map((r) => (
        <tr key={r}>
          {[0, 1, 2, 3, 4, 5, 6].map((c) => {
            const n = r * 7 + c - first + 1;
            const shown = n > 0 && n <= days ? n : null;
            return (
              <Day key={c} $sun={c === 0} $today={n === today}>
                {shown && boxed.includes(n) ? <Boxed $light={n === today}>{n}</Boxed> : shown}
              </Day>
            );
          })}
        </tr>
      ))}
    </tbody>
  </Month>
);

const App = () => (
  <Page>
    <Global />
    <TitleBar>
      <ProIcon size={15} />
      <Title>MSD Organizer Freeware 12.0 - [Calendar]</Title>
      <Credit>screenshot care of www.portablefreeware.com</Credit>
      <WinButton aria-label="Minimize"><Icon w={10} h={9}><path d="M1 7.500h6" stroke="#000" strokeWidth="2" /></Icon></WinButton>
      <WinButton aria-label="Maximize"><Icon w={10} h={9}><path d="M.5 1.500h8v7h-8zM.5 1h8" fill="none" stroke="#000" /></Icon></WinButton>
      <WinButton aria-label="Close window" $gap><Icon w={9} h={8}><path d="M1 1l6 6M7 1L1 7" stroke="#000" strokeWidth="1.600" /></Icon></WinButton>
    </TitleBar>

    <MenuBar>
      <MenuIcon>
        <Icon w={13} h={13}>
          <rect x="1" y="1" width="11" height="11" rx="1" fill="#fff" stroke="#6a4030" strokeWidth="1.500" />
          <path d="M3 0v3M10 0v3M4 5h2v5H4M4 7.500h2M9 5v5" stroke="#221" fill="none" />
        </Icon>
      </MenuIcon>
      {menus.map(([text, w], i) => <MenuLink key={i} $w={w}>{text}</MenuLink>)}
    </MenuBar>

    <BigBar>
      <Grip />
      {bigButtons.map((b) => (
        <React.Fragment key={b.name}>
          <BigButton $w={b.w} $on={b.on} disabled={b.off}><BigGlyph>{b.icon}</BigGlyph>{b.name}</BigButton>
          {b.sep && <Sep $l={b.sep[0]} $r={b.sep[1]} />}
        </React.Fragment>
      ))}
      <More dark />
    </BigBar>

    <SmallBar $tone="green">
      <Select label="Show" value="Alarms and Tasks" w={149} />
      <Sep $l={2} $r={2} />
      <Select label="Search text" value="" w={209} />
      <IconButton $w={32} aria-label="Clear search"><CrossIcon /></IconButton>
      <Sep $l={1} $r={1} />
      <Select label="Category" value="" w={90} />
      <IconButton $w={32} aria-label="Clear category"><CrossIcon /></IconButton>
      <Sep $l={2} $r={1} />
      <IconButton $w={30} aria-label="Find"><BinocularsIcon /></IconButton>
      <IconButton $w={34} aria-label="Find next"><BinocularsIcon muted /></IconButton>
      <IconButton $w={29} aria-label="Preview"><LensIcon /></IconButton>
      <Sep $l={2} $r={1} />
      <TextButton $w={60}><DoorIcon />Close</TextButton>
      <More />
    </SmallBar>

    <ViewBar $tone="green">
      <TextButton $w={62} $gap={7}><TodayIcon />Today</TextButton>
      <TextButton $w={54}><GridIcon body="M10 7h6v4h-6z" /> Day</TextButton>
      <TextButton $w={62} $on $gap={7}><GridIcon body="M4 7h12v4H4z" />Week</TextButton>
      <TextButton $w={65}><GridIcon body="M2 6h16v6H2z" />Month</TextButton>
      <TextButton $w={82}><GridIcon body="M2 6h16v6H2z" />Month (2)</TextButton>
      <TextButton $w={58}><GridIcon body="M1 4h18v9H1z" />Year</TextButton>
      <TextButton $w={56} $gap={5}><DataIcon />Data</TextButton>
      <Sep $l={2} $r={1} />
      <TextButton $w={31} $on aria-label="Day board"><Board31Icon /></TextButton>
      <Sep $l={2} $r={2} />
      <TextButton $w={76} $gap={4}><ClockIcon size={20} /><span><u>A</u>larms</span><DownIcon w={5} /></TextButton>
      <TextButton $w={70} $gap={4}><TaskIcon size={20} /><span><u>T</u>asks</span><DownIcon w={5} /></TextButton>
      <Sep $l={1} $r={2} />
      <IconButton $w={30} aria-label="Print"><PrinterIcon /></IconButton>
      <Sep $l={2} $r={2} />
      <IconButton $w={30} aria-label="Notebook"><NotebookIcon /></IconButton>
      <More />
    </ViewBar>

    <Main>
      <Planner>
        <PlanBar>
          <Field aria-label="Date" defaultValue="03/16/2014" />
          <Toggle $w={28} aria-label="Pick date"><CalGridIcon /></Toggle>
          <Toggle $w={22} aria-label="Previous week"><ArrowIcon /></Toggle>
          <Toggle $w={22} aria-label="Current week"><DiamondIcon round /></Toggle>
          <Toggle $w={24} aria-label="Next week"><ArrowIcon right /></Toggle>
          <Sep $l={3} $r={3} />
          <Toggle $on aria-label="One day"><OneIcon /></Toggle>
          <Sep $l={2} $r={3} />
          <Toggle $on $w={22} aria-label="Recurrent"><RefreshIcon size={15} /></Toggle>
          <Toggle $w={24} aria-label="Clock"><FaceIcon /></Toggle>
          <Toggle $on $w={23} aria-label="Hours"><TwelveIcon /></Toggle>
          <Toggle $on $w={23} aria-label="Percentages"><PercentIcon /></Toggle>
          <Toggle $w={22} aria-label="Fit height"><StretchIcon /></Toggle>
          <Toggle $on aria-label="Fit width"><StretchIcon across /></Toggle>
          <Sep $l={2} $r={2} />
          <Toggle aria-label="Print week"><PrinterIcon w={17} h={15} grey /></Toggle>
          <WeekLabel>Mar-16-2014, week 11 (current)</WeekLabel>
          <Sep />
        </PlanBar>

        <DayHeads>
          <DayHead />
          {heads.map((h, i) => <DayHead key={h} $now={i === 1}>{h}</DayHead>)}
        </DayHeads>

        <Body>
          {hours.map(([h, half], i) => (
            <TimeCell key={h} $row={i * 2 + 1} $two={h > 9}><Hour>{h}</Hour><Small>{half}</Small><Half>30</Half></TimeCell>
          ))}
          {Array.from({ length: 14 }, (_, r) => <Tick key={r} $row={r + 1} />)}
          {Array.from({ length: 98 }, (_, i) => <Slot key={i} $col={(i % 7) + 2} $row={Math.floor(i / 7) + 1} />)}
          <Entry $col={4} $row={6} $bg="#e0ffe0"><InfoIcon /><EntryText>10:3...</EntryText><RefreshIcon /><BellIcon /></Entry>
          <Entry $col={5} $row={6} $bg="#e0ffe0"><InfoIcon /><EntryText>10:3...</EntryText><RefreshIcon color="#b01818" /><BellIcon /></Entry>
          <Entry $col={6} $row={6} $bg="#fff4b0" $on><InfoIcon /><EntryText>10:3...</EntryText><RefreshIcon color="#b01818" /><BellIcon /></Entry>
          <Entry $col={7} $row={6} $bg="#e0ffe0" $end><InfoIcon /><EntryText>1...</EntryText></Entry>
          <WebEntry $col={3} $row={9} $bg="#ccffff"><EntryText>www.porta...</EntryText><BellIcon off /></WebEntry>
          <Entry $col={5} $row={11} $bg="#ffe4e4"><LockIcon /><EntryText>&nbsp;01:0...</EntryText><RefreshIcon /><BellIcon /></Entry>
          <LongEntry>
            <LongHead><NoteIcon />W..</LongHead>
            <LongText>I have to write a report about the tasks I have comple</LongText>
          </LongEntry>
          <ScrollTrack>
            <ScrollButton aria-label="Scroll up"><Icon w={7} h={4}><path d="M0 4h7L3.500 0z" /></Icon></ScrollButton>
            <ScrollSpace $grow={137} />
            <ScrollButton aria-label="Scroll position" />
            <ScrollSpace $grow={163} />
            <ScrollButton aria-label="Scroll down"><DownIcon /></ScrollButton>
          </ScrollTrack>
        </Body>

        <Foot>
          <FootCell />
          {loads.map(([t, v], i) => <FootCell key={i}><Load><LoadBar $v={v} /><LoadText>{t}</LoadText></Load></FootCell>)}
        </Foot>

        <MoreBelow aria-label="More below">
          <Icon w={16} h={5}><path d="M0 0h5L2.500 4zM7 3h2v2H7zM10 3h2v2h-2zM13 3h2v2h-2z" /></Icon>
        </MoreBelow>

        <Tip role="tooltip">
          <TipLine>Alarm 03/20/2014</TipLine>
          <TipLine>10:30 AM Breakfast time</TipLine>
          <TipLine>Periodic: 1 day, infinite</TipLine>
          <TipLine>Updated by Administrator 03/17/2014 07:27 PM</TipLine>
          <TipRule />
          <TipLine>Let's stop working for a while and let's go for our wonderful breakfast.</TipLine>
          <TipTail><Icon w={22} h={18}><path d="M1 0L16 16L20 0" fill="#ffffe1" /><path d="M1 0L16 16" stroke="#000" /></Icon></TipTail>
          <Pointer><CursorIcon /></Pointer>
        </Tip>

        <ContextMenu>
          {items.map((it, i) => (
            <React.Fragment key={i}>
              <li><MenuItem disabled={it.off}>{it.icon}<span>{it.text}</span><span>{it.keys}</span></MenuItem></li>
              {it.rule && <MenuRule />}
            </React.Fragment>
          ))}
        </ContextMenu>
      </Planner>

      <Side>
        <SideBar>
          <Select label="Year" value="2014" w={68} />
          <Sep $l={4} $r={7} />
          <Toggle aria-label="Previous year"><ArrowIcon /></Toggle>
          <Toggle $w={36} aria-label="This year"><DiamondIcon /></Toggle>
          <Toggle aria-label="Next year"><ArrowIcon right /></Toggle>
        </SideBar>
        {months.map((m) => <MonthTable key={m.name} {...m} />)}
      </Side>
    </Main>

    <Clock><ClockFace>07:43 PM</ClockFace></Clock>
  </Page>
);

export default App;
